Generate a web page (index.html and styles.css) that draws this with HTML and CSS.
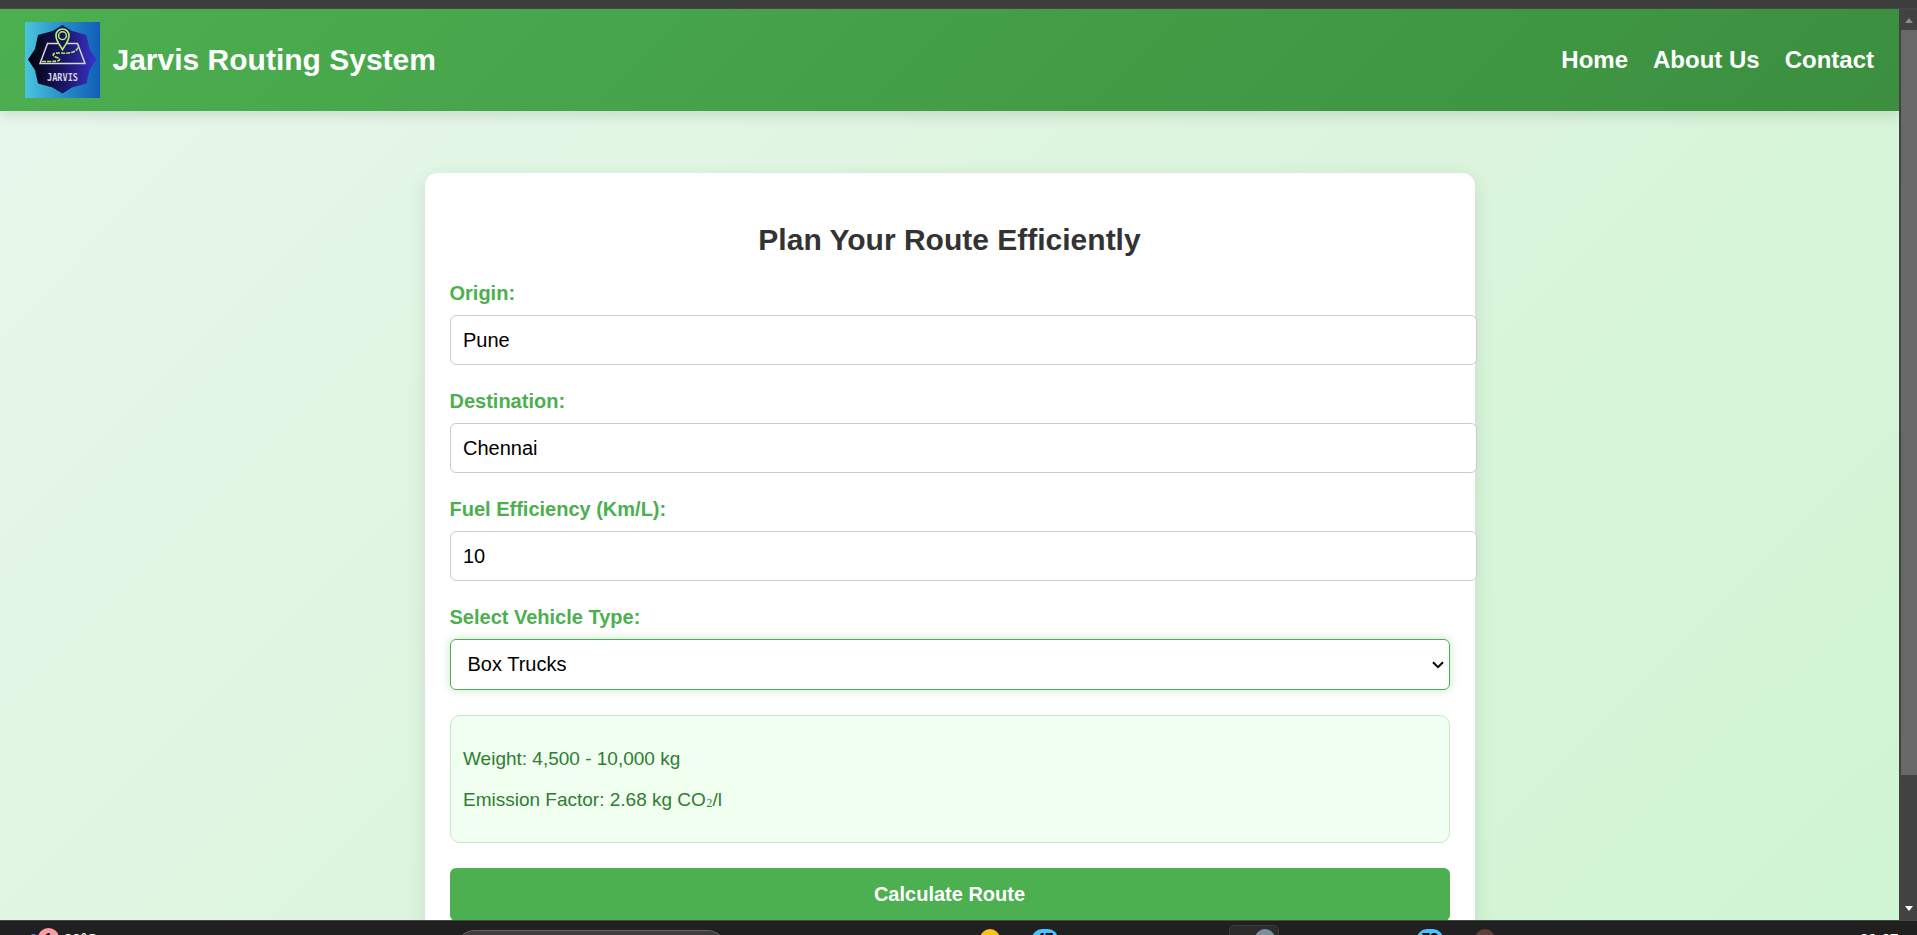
FILE: index.html
```html
<!DOCTYPE html>
<html lang="en">
<head>
<meta charset="utf-8">
<title>Jarvis Routing System</title>
<link rel="stylesheet" href="styles.css">
</head>
<body>
<div class="screen">
  <div class="browser-edge"></div>
  <div class="viewport">
    <div class="page">
      <header class="header">
        <div class="brand">
          <svg class="logo" width="75" height="76" viewBox="0 0 75 76">
            <defs>
              <linearGradient id="sky"><stop offset="0" stop-color="#4cc4dc"/><stop offset=".5" stop-color="#268fc8"/><stop offset="1" stop-color="#125db8"/></linearGradient>
              <linearGradient id="badge"><stop offset="0" stop-color="#020208"/><stop offset=".55" stop-color="#1c176b"/><stop offset="1" stop-color="#3a33cc"/></linearGradient>
            </defs>
            <rect width="75" height="76" fill="url(#sky)"/>
            <path d="M37.500 3l9.500 6 14.500 4 3 14 7 10.500-7 10.500-3 13.500-14.500 4-9.500 6-10-6-14.500-4-3-13.500-7-10.500 7-10.500 3-14L27.500 9z" fill="url(#badge)"/>
            <path d="M33 21.500H22.500L15 41.500h45L52.500 21.500H41.500" fill="none" stroke="#d6d4dc" stroke-width="1.500"/>
            <path d="M17 39.500h8c10 0 12-2 7-4-7-2.500-4-5 4-4.500 9 1 17-1 17.500-7.500" fill="none" stroke="#b4e86a" stroke-width="1.600" stroke-dasharray="4 1"/>
            <path d="M37.500 27.500c-3-5-6.500-8.500-6.500-14a6.500 6.500 0 0 1 13 0c0 5.500-3.500 9-6.500 14z" fill="#17145a" stroke="#b4ee6c" stroke-width="1.700"/>
            <circle cx="37.500" cy="13.700" r="3.900" fill="none" stroke="#b4ee6c" stroke-width="1.500"/>
            <text class="logo-text" x="37.500" y="59" text-anchor="middle" textLength="31" lengthAdjust="spacingAndGlyphs">JARVIS</text>
          </svg>
          <h1 class="brand-name">Jarvis Routing System</h1>
        </div>
        <nav class="nav"><a>Home</a><a>About Us</a><a>Contact</a></nav>
      </header>
      <main class="card">
        <h2 class="card-title">Plan Your Route Efficiently</h2>
        <div class="field"><label class="label" for="origin">Origin:</label><input class="input" id="origin" value="Pune"></div>
        <div class="field"><label class="label" for="dest">Destination:</label><input class="input" id="dest" value="Chennai"></div>
        <div class="field"><label class="label" for="fuel">Fuel Efficiency (Km/L):</label><input class="input" id="fuel" value="10"></div>
        <div class="field">
          <span class="label">Select Vehicle Type:</span>
          <div class="select"><span>Box Trucks</span>
            <svg width="12" height="8" viewBox="0 0 12 8"><path d="M1 1.200l5 5 5-5" fill="none" stroke="#000" stroke-width="2"/></svg>
          </div>
        </div>
        <div class="info">
          <p>Weight: 4,500 - 10,000 kg</p>
          <p>Emission Factor: 2.68 kg CO<span class="sub">₂</span>/l</p>
        </div>
        <button class="submit">Calculate Route</button>
      </main>
    </div>
    <div class="scrollbar">
      <svg class="arrow-up" width="8" height="5" viewBox="0 0 8 5"><path d="M4 0l4 5H0z" fill="#8c8c8c"/></svg>
      <div class="thumb"></div>
      <svg class="arrow-down" width="8" height="5" viewBox="0 0 8 5"><path d="M0 0h8L4 5z" fill="#fff"/></svg>
    </div>
  </div>
  <div class="taskbar">
    <i class="weather"></i><i class="alert">1</i><span class="temp">30°C</span>
    <i class="search"></i><i class="dot yellow"></i>
    <i class="count mail">47</i><i class="active-app"></i><i class="dot grey"></i>
    <i class="count chat">72</i><i class="dot brown"></i><span class="clock">20:27</span>
  </div>
</div>
</body>
</html>
```
FILE: styles.css
```css
* { box-sizing: border-box; }
body { margin: 0; font-family: "Liberation Sans", Arial, sans-serif; }
.screen { display: flex; flex-direction: column; height: 935px; overflow: hidden; }
.browser-edge { flex: none; height: 9px; background: #3c3c3c; border-bottom: 1px solid #464646; }
.viewport { flex: none; display: flex; height: 911px; overflow: hidden; }
.page { flex: 1; min-width: 0; overflow: hidden; background: linear-gradient(135deg, #e8f8ed 0%, #def5df 40%, #cef5d2 100%) 0 0 / 100% 1070px; }
.header { display: flex; justify-content: space-between; align-items: center; height: 102px; padding: 0 25px; background: linear-gradient(135deg, #4caf50, #3b8f3f); box-shadow: 0 5px 12.5px rgba(0, 0, 0, .11); color: #fff; }
.brand { display: flex; align-items: center; gap: 12.5px; }
.logo { display: block; }
.logo-text { font: bold 11px "DejaVu Sans Mono", monospace; fill: #d6d4e6; }
.brand-name { margin: 0; font-size: 30px; line-height: 34px; }
.nav { display: flex; gap: 25px; font-size: 24px; font-weight: bold; }
.card { width: 1050px; height: 850px; margin: 62px auto 0; padding: 49px 25px 25px; background: #fff; border-radius: 12.5px; box-shadow: 0 5px 19px rgba(0, 0, 0, .1); }
.card-title { margin: 0 0 24px; text-align: center; color: #333; font-size: 30px; line-height: 36px; }
.field { height: 83px; margin-bottom: 25px; }
.label { display: block; height: 33px; line-height: 23px; color: #4caf50; font-size: 20px; font-weight: bold; }
.input { display: block; width: 1027px; height: 50px; padding: 0 12.5px; border: 1px solid #ccc; border-radius: 6px; background: #fff; color: #000; font: 20px "Liberation Sans", Arial, sans-serif; }
.select { display: flex; align-items: center; justify-content: space-between; height: 51px; padding: 0 5px 0 17px; border: 1px solid #4caf50; border-radius: 6px; box-shadow: 0 0 10px rgba(76, 175, 80, .3); font-size: 20px; }
.info { height: 128px; margin: 26px 0 25px; padding: 32px 12.5px 0; border: 1px solid #c8e6c9; border-radius: 10px; background: #f0fff0; color: #2e7d32; font-size: 19px; line-height: 22px; }
.info p { margin: 0 0 19px; }
.sub { position: relative; top: -3px; font-family: "Liberation Serif", serif; line-height: 1; }
.submit { display: block; width: 100%; height: 53px; padding: 0; border: 0; border-radius: 6px; background: #4caf50; color: #fff; font: bold 20px "Liberation Sans", Arial, sans-serif; }
.scrollbar { flex: none; display: flex; flex-direction: column; width: 18px; padding: 9px 0 9px 2px; background: #424242; }
.arrow-up { margin: 0 0 7px 4px; }
.thumb { height: 745px; background: #686868; }
.arrow-down { margin: auto 0 0 4px; }
.taskbar { position: relative; flex: none; height: 15px; overflow: hidden; background: #202020; border-top: 1px solid #4a4a4a; color: #fff; font-size: 15px; font-weight: bold; line-height: 17px; }
/* Taskbar items are cut off by the lower edge of the screen. */
.taskbar > * { position: absolute; font-style: normal; }
.weather { left: 30px; top: 13px; width: 7px; height: 7px; border-radius: 50%; background: #4a86d8; }
.alert { left: 38px; top: 7px; width: 21px; height: 21px; border-radius: 50%; background: #ff99a4; color: #222; text-align: center; line-height: 20px; font-size: 14px; }
.temp { left: 64px; top: 9px; }
.search { left: 455px; top: 9px; width: 272px; height: 40px; border: 1px solid #666; border-radius: 20px; background: #3e3c3c; }
.dot { top: 8px; width: 20px; height: 20px; border-radius: 50%; }
.yellow { left: 980px; background: #ffc20e; }
.grey { left: 1255px; background: #78909c; }
.brown { left: 1475px; background: #5d4037; }
.count { top: 8px; width: 26px; height: 20px; border-radius: 10px; background: #4cc2ff; color: #000; text-align: center; line-height: 18px; }
.mail { left: 1032px; }
.chat { left: 1417px; }
.active-app { left: 1229px; top: 4px; width: 50px; height: 40px; border: 1px solid #3c3c3c; border-radius: 5px; background: #2c2c2c; }
.clock { left: 1860px; top: 9px; }
```
